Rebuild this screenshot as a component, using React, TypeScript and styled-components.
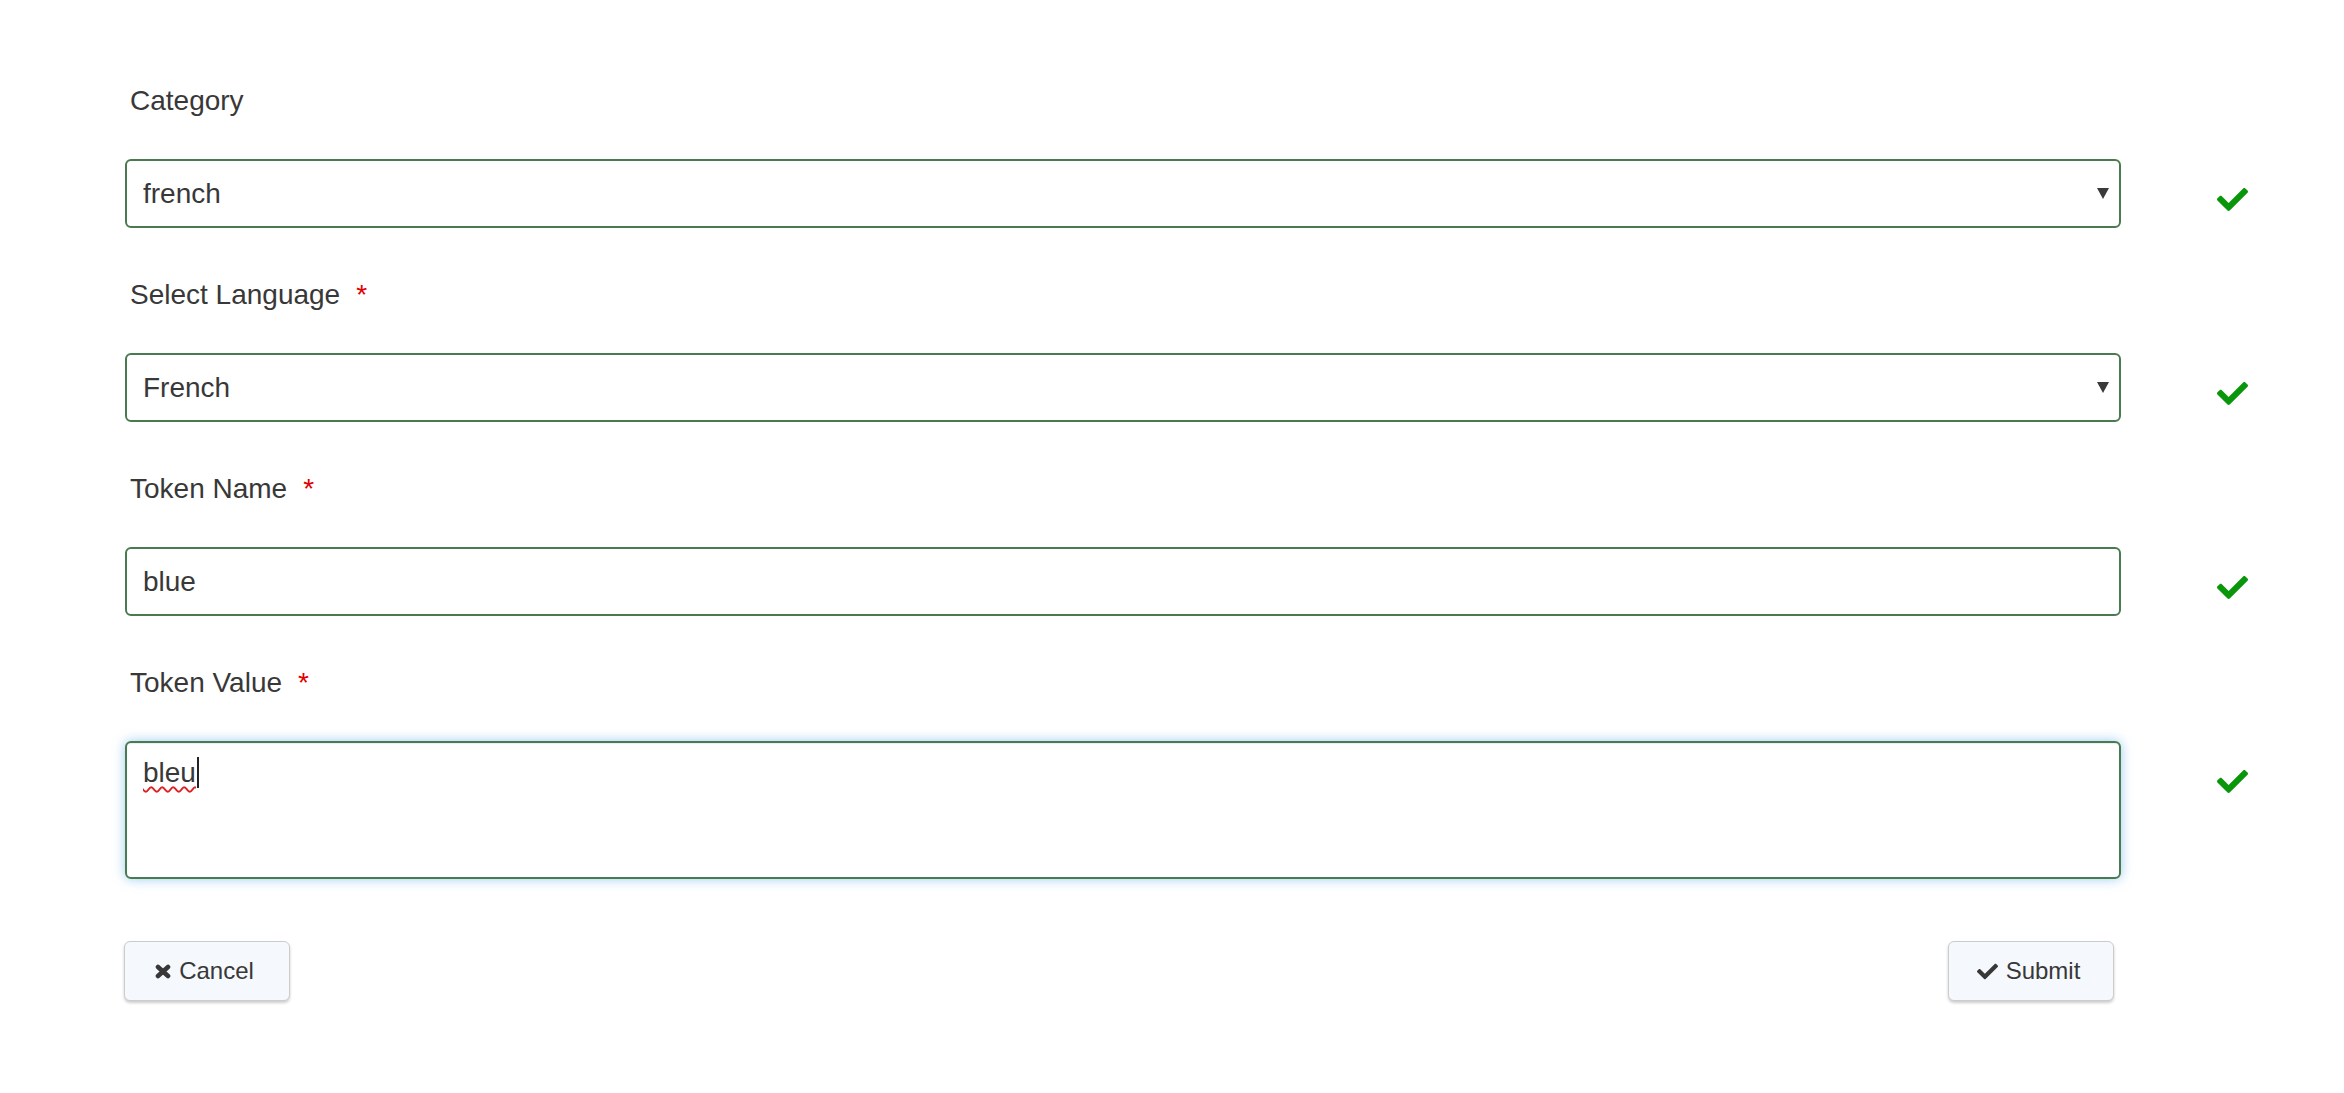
import React from "react";
import styled, { createGlobalStyle } from "styled-components";
import { FaCheck } from "react-icons/fa";

const GlobalStyle = createGlobalStyle`
  html, body {
    margin: 0;
    padding: 0;
    background: #ffffff;
  }
  body {
    font-family: "Liberation Sans", Arial, sans-serif;
    color: #333333;
  }
  * { box-sizing: border-box; }
`;

const Page = styled.div`
  padding: 81px 0 60px 125px;
  width: 2344px;
`;

const Form = styled.form`
  display: flex;
  flex-direction: column;
`;

const Group = styled.div<{ $last?: boolean }>`
  display: flex;
  flex-direction: column;
  margin-bottom: ${(p) => (p.$last ? "62px" : "47px")};
`;

const Label = styled.label`
  font-size: 28px;
  line-height: 40px;
  height: 40px;
  padding-left: 5px;
  margin-bottom: 38px;
  color: #383838;
  white-space: nowrap;
`;

const Required = styled.span`
  color: #e00000;
  margin-left: 16px;
`;

const FieldRow = styled.div`
  display: flex;
  align-items: flex-start;
`;

const FieldWrap = styled.div`
  position: relative;
  width: 1996px;
  flex: none;
`;

const fieldBase = `
  width: 100%;
  border: 2px solid #4a7a50;
  border-radius: 6px;
  background: #ffffff;
  font-family: "Liberation Sans", Arial, sans-serif;
  font-size: 28px;
  color: #383838;
  outline: none;
`;

const Select = styled.select`
  ${fieldBase}
  height: 69px;
  padding: 0 40px 0 16px;
  appearance: none;
  -webkit-appearance: none;
  line-height: 65px;
`;

const Input = styled.input`
  ${fieldBase}
  height: 69px;
  padding: 0 16px;
`;

const TextBox = styled.div`
  ${fieldBase}
  height: 138px;
  padding: 11px 16px;
  line-height: 38px;
  box-shadow: inset 0 1px 1px rgba(0, 0, 0, 0.075), 0 0 12px rgba(102, 175, 233, 0.65);
`;

const Misspelled = styled.span`
  text-decoration: underline wavy #e02020;
  text-decoration-thickness: 1.5px;
  text-underline-offset: 4px;
`;

const Caret = styled.span`
  display: inline-block;
  width: 2px;
  height: 31px;
  margin-left: 1px;
  background: #222;
  vertical-align: -6px;
`;

const Arrow = styled.svg`
  position: absolute;
  right: 12px;
  top: 29px;
  width: 12px;
  height: 11px;
  pointer-events: none;
`;

const Status = styled.div`
  margin-left: 96px;
  padding-top: 25px;
  color: #0a960a;
  display: flex;
  line-height: 0;
`;

const Actions = styled.div`
  display: flex;
  justify-content: space-between;
  width: 1990px;
  margin-left: -1px;
`;

const Button = styled.button`
  display: inline-flex;
  align-items: center;
  justify-content: center;
  gap: 8px;
  width: 166px;
  height: 60px;
  padding: 0 5px 0 0;
  border: 1.5px solid #cccccc;
  border-radius: 6px;
  background: #f5f9fd;
  box-shadow: 0 2px 3px rgba(0, 0, 0, 0.2);
  font-family: "Liberation Sans", Arial, sans-serif;
  font-size: 24px;
  color: #383838;
  cursor: pointer;
`;

const IconSvg = styled.svg`
  display: block;
  flex: none;
`;

const SelectArrow = () => (
  <Arrow viewBox="0 0 12 11">
    <polygon points="0,0 12,0 6,11" fill="#3a3a3a" />
  </Arrow>
);

const TimesIcon = () => (
  <IconSvg width="16" height="15" viewBox="0 0 16 15">
    <g stroke="#383838" strokeWidth="4.6" strokeLinecap="round">
      <line x1="3" y1="3" x2="13" y2="12" />
      <line x1="13" y1="3" x2="3" y2="12" />
    </g>
  </IconSvg>
);

const StatusCheck = () => (
  <Status>
    <FaCheck size={31} />
  </Status>
);

export default function App() {
  return (
    <Page>
      <GlobalStyle />
      <Form onSubmit={(e) => e.preventDefault()}>
        <Group>
          <Label>Category</Label>
          <FieldRow>
            <FieldWrap>
              <Select defaultValue="french">
                <option value="french">french</option>
                <option value="english">english</option>
              </Select>
              <SelectArrow />
            </FieldWrap>
            <StatusCheck />
          </FieldRow>
        </Group>

        <Group>
          <Label>
            Select Language<Required>*</Required>
          </Label>
          <FieldRow>
            <FieldWrap>
              <Select defaultValue="French">
                <option value="French">French</option>
                <option value="English">English</option>
              </Select>
              <SelectArrow />
            </FieldWrap>
            <StatusCheck />
          </FieldRow>
        </Group>

        <Group>
          <Label>
            Token Name<Required>*</Required>
          </Label>
          <FieldRow>
            <FieldWrap>
              <Input defaultValue="blue" />
            </FieldWrap>
            <StatusCheck />
          </FieldRow>
        </Group>

        <Group $last>
          <Label>
            Token Value<Required>*</Required>
          </Label>
          <FieldRow>
            <FieldWrap>
              <TextBox role="textbox" aria-multiline="true">
                <Misspelled>bleu</Misspelled>
                <Caret />
              </TextBox>
            </FieldWrap>
            <StatusCheck />
          </FieldRow>
        </Group>

        <Actions>
          <Button type="button">
            <TimesIcon />
            Cancel
          </Button>
          <Button type="submit">
            <FaCheck size={21} color="#383838" />
            Submit
          </Button>
        </Actions>
      </Form>
    </Page>
  );
}
